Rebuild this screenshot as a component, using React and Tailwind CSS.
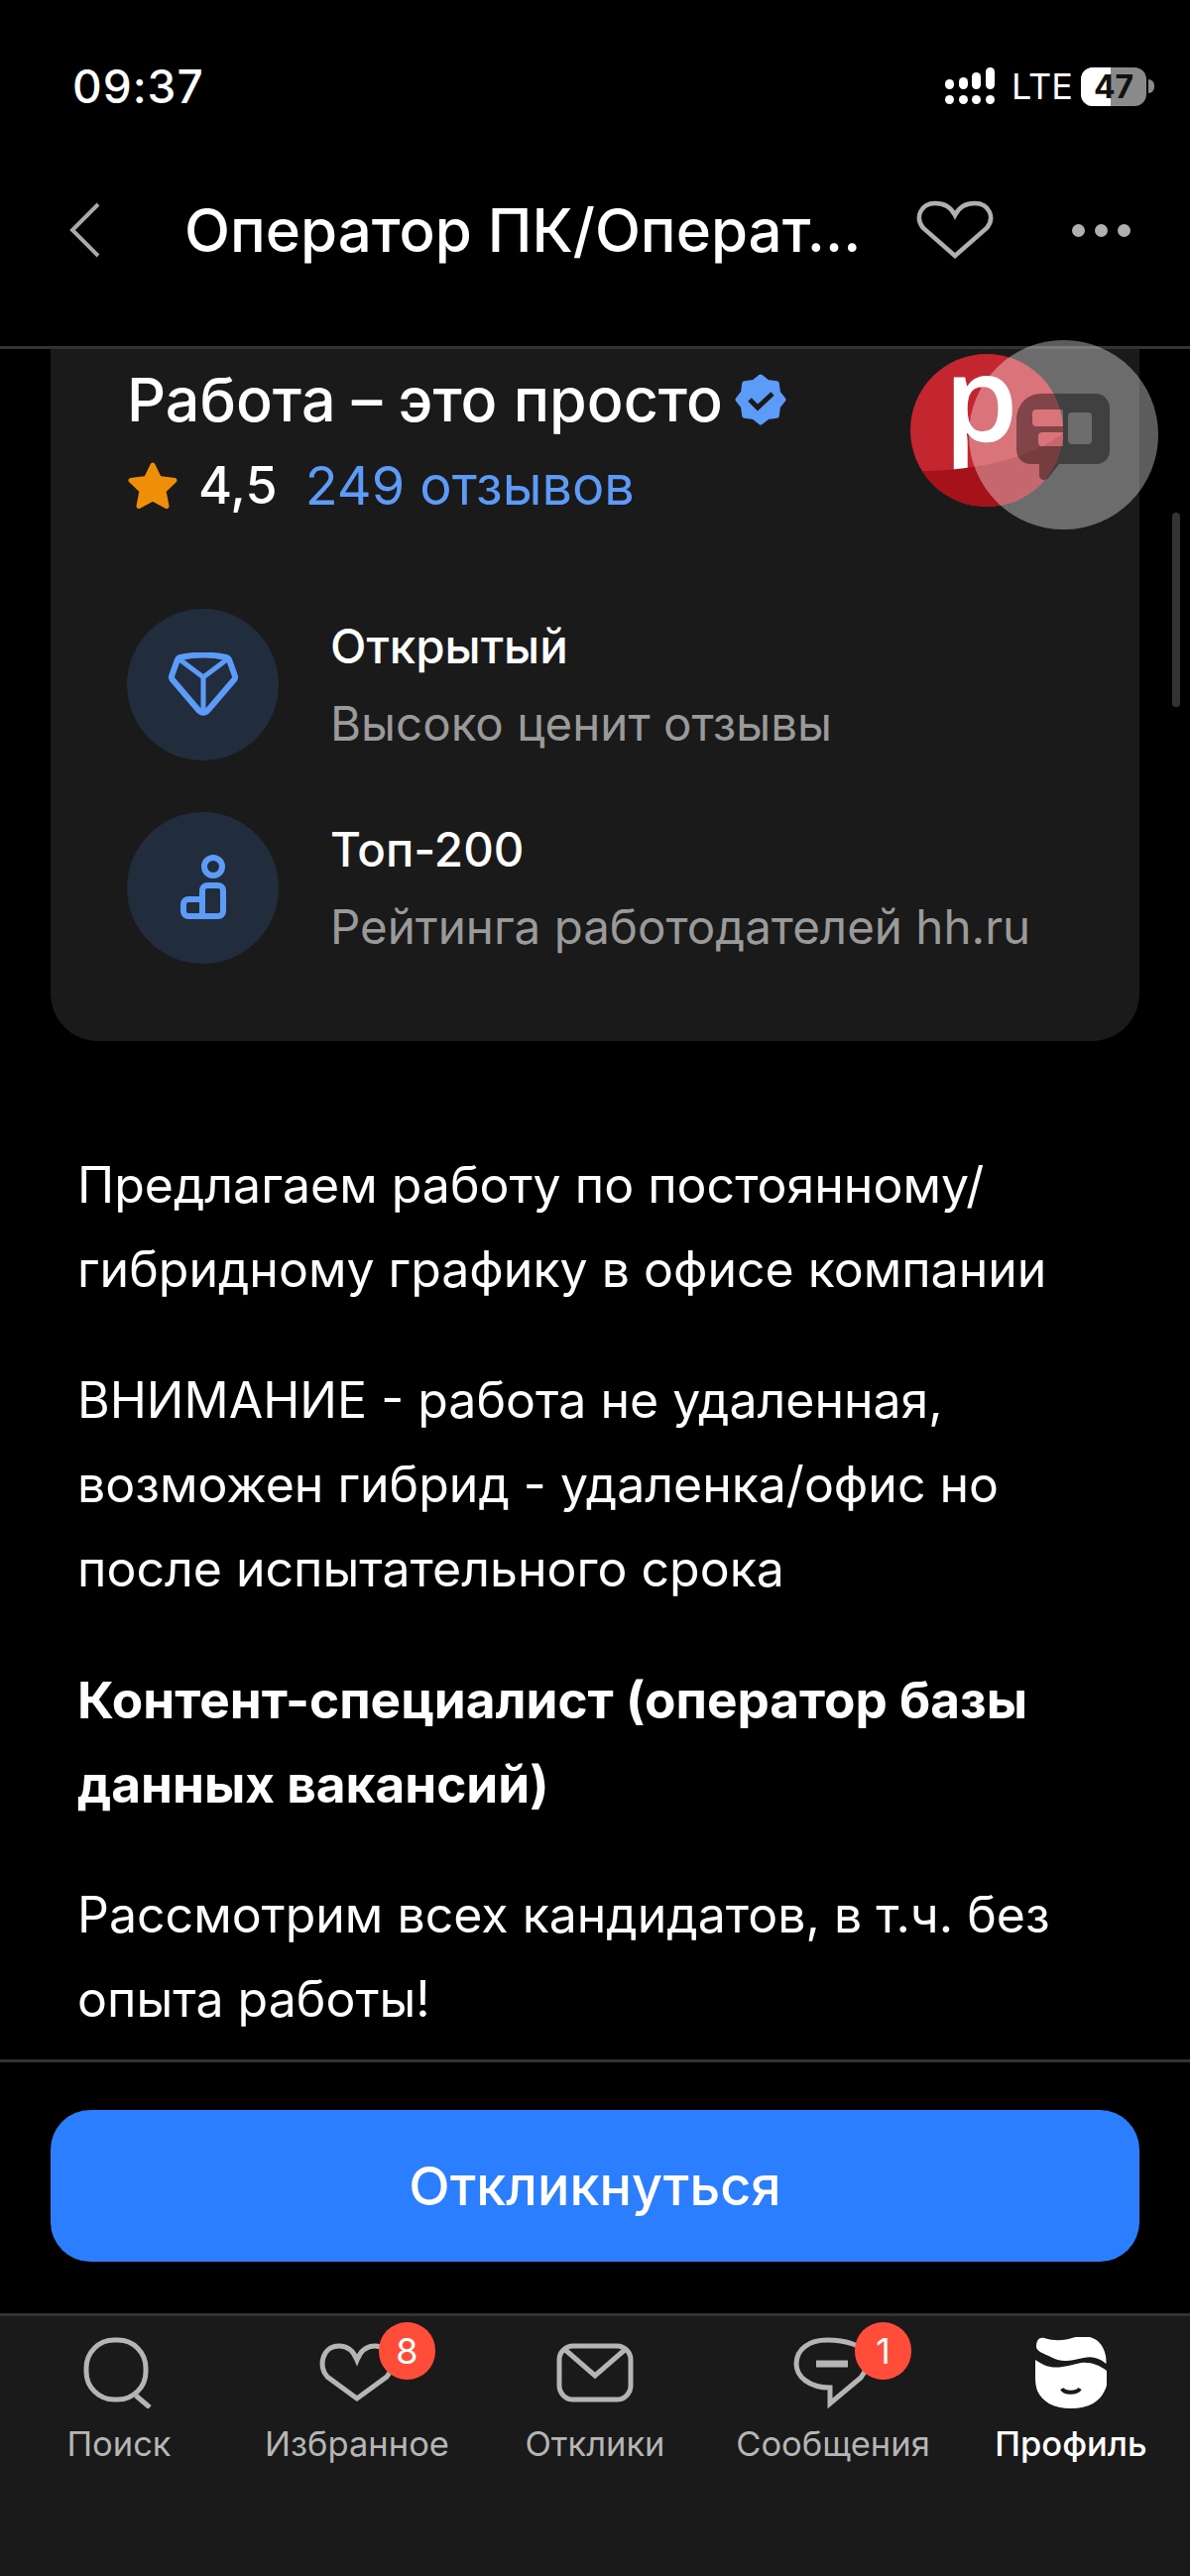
import React from 'react';

const FONT = 'font-["Inter","Noto_Sans",sans-serif]';

const PARAGRAPHS = [
  { lines: ['Предлагаем работу по постоянному/', 'гибридному графику в офисе компании'] },
  { lines: ['ВНИМАНИЕ - работа не удаленная,', 'возможен гибрид - удаленка/офис но', 'после испытательного срока'] },
  { lines: ['Контент-специалист (оператор базы', 'данных вакансий)'], bold: true },
  { lines: ['Рассмотрим всех кандидатов, в т.ч. без', 'опыта работы!'] },
];

function StatusBar() {
  return (
    <div className="h-[174px] pl-[73px] pr-[36px] pt-[59px] flex justify-between items-start">
      <span className="text-[46px] leading-[56px] font-medium tracking-[1px] text-white">09:37</span>
      <div className="flex items-center gap-[17px] pt-[8px]">
        <svg width="50" height="38" viewBox="0 0 50 38" fill="#fff">
          <rect x="0" y="28" width="9" height="9" rx="4.5" />
          <rect x="14" y="28" width="9" height="9" rx="4.5" />
          <rect x="27" y="28" width="9" height="9" rx="4.5" />
          <rect x="41" y="28" width="9" height="9" rx="4.5" />
          <rect x="0" y="12" width="9" height="10" rx="4.5" />
          <rect x="14" y="10" width="9" height="12" rx="4.5" />
          <rect x="27" y="5" width="9" height="17" rx="4.5" />
          <rect x="41" y="0" width="9" height="22" rx="4.5" />
        </svg>
        <span className="text-[36px] leading-[40px] font-normal text-white w-[53px]">LTE</span>
        <div className="flex items-center gap-[2px]">
          <div className="relative w-[66px] h-[39px] rounded-[12px] overflow-hidden bg-[#8a8a8a] flex items-center justify-center">
            <div className="absolute left-0 top-0 bottom-0 w-[30px] bg-white" />
            <span className="relative text-[32px] leading-[39px] font-bold text-[#111]">47</span>
          </div>
          <div className="w-[6px] h-[14px] rounded-r-full bg-[#8a8a8a]" />
        </div>
      </div>
    </div>
  );
}

function NavBar() {
  return (
    <div className="h-[122px] flex items-center pl-[70px] pr-[60px] pb-[6px]">
      <svg width="32" height="58" viewBox="0 0 32 58" fill="none" stroke="#a9a9a9" strokeWidth="4" className="shrink-0">
        <path d="M29 3 3 29l26 26" />
      </svg>
      <span className="ml-[84px] w-[700px] text-[60px] leading-[70px] font-medium text-white whitespace-nowrap">Оператор ПК/Операт…</span>
      <svg width="78" height="60" viewBox="0 0 78 60" fill="none" stroke="#b0b0b0" strokeWidth="4.5" className="ml-[38px] shrink-0">
        <path d="M39 56 7 28C-2 17 5 3 19 3c9 0 16 4 20 12 4-8 11-12 20-12 14 0 21 14 12 25z" />
      </svg>
      <div className="ml-auto flex gap-[10px]">
        <div className="w-[13px] h-[13px] rounded-full bg-[#b0b0b0]" />
        <div className="w-[13px] h-[13px] rounded-full bg-[#b0b0b0]" />
        <div className="w-[13px] h-[13px] rounded-full bg-[#b0b0b0]" />
      </div>
    </div>
  );
}

function VerifiedBadge() {
  return (
    <svg width="52" height="52" viewBox="0 0 52 52" className="shrink-0 -ml-[2px]">
      <path
        d="M26 3 33 8.500 42.300 9.700 43.500 19 49 26 43.500 33 42.300 42.300 33 43.500 26 49 19 43.500 9.700 42.300 8.500 33 3 26 8.500 19 9.700 9.700 19 8.500Z"
        fill="#5c9bf7"
        stroke="#5c9bf7"
        strokeWidth="5"
        strokeLinejoin="round"
      />
      <path d="M15 26l8 8 15-14" fill="none" stroke="#1a1a1a" strokeWidth="5" />
    </svg>
  );
}

function DiamondIcon() {
  return (
    <svg width="72" height="66" viewBox="0 0 72 66" fill="none" stroke="#5c9bf7" strokeWidth="6" strokeLinejoin="round">
      <path d="M13 5c14-3 32-3 46 0 2 .500 3 2 3.500 3.500L68 24c.500 1 0 2-.500 3L41 58c-3 3.500-7 3.500-10 0L4.500 27c-.500-1-1-2-.500-3L9.500 8.500C10 7 11 5.500 13 5Z" />
      <path d="M12 7 36 25 60 7M36 25v34" strokeWidth="5" />
    </svg>
  );
}

function RankIcon() {
  return (
    <svg width="46" height="68" viewBox="0 0 46 68" fill="none" stroke="#5c9bf7" strokeWidth="6" strokeLinejoin="round">
      <circle cx="33" cy="12" r="9" />
      <path d="M22 62V36a5 5 0 0 1 5-5h11a5 5 0 0 1 5 5v21a5 5 0 0 1-5 5H8a5 5 0 0 1-5-5v-7a5 5 0 0 1 5-5h14" />
    </svg>
  );
}

function StarIcon() {
  return (
    <svg width="52" height="50" viewBox="0 0 52 50" fill="#ef8f07" stroke="#ef8f07" strokeWidth="5" strokeLinejoin="round">
      <path d="M26 4 32.500 17.500 48 19.500 37 30 40 45.500 26 38 12 45.500 15 30 4 19.500 19.500 17.500Z" />
    </svg>
  );
}

function Perk({ icon, title, text }) {
  return (
    <div className="flex items-center gap-[53px]">
      <div className="w-[153px] h-[153px] rounded-full bg-[#212c3d] flex items-center justify-center shrink-0">{icon}</div>
      <div className="flex flex-col gap-[20px] -ml-[1px]">
        <span className="text-[47.500px] leading-[58px] font-medium text-white">{title}</span>
        <span className="text-[47.500px] leading-[58px] text-[#9a9a9a] whitespace-nowrap">{text}</span>
      </div>
    </div>
  );
}

function CompanyCard() {
  return (
    <div className="mx-[51px] h-[698px] bg-[#1a1a1a] rounded-b-[48px] pl-[77px] pr-[40px]">
      <div className="pt-[14px] flex items-center gap-[14px] h-[88px]">
        <span className="text-[61px] leading-[70px] font-medium text-white whitespace-nowrap">Работа – это просто</span>
        <VerifiedBadge />
      </div>
      <div className="mt-[20px] h-[60px] flex items-center">
        <StarIcon />
        <span className="ml-[20px] text-[52px] leading-[60px] font-medium text-white">4,5</span>
        <span className="ml-[28px] text-[54px] leading-[60px] text-[#5c9bf7] whitespace-nowrap">249 отзывов</span>
      </div>
      <div className="mt-[94px] flex flex-col gap-[52px]">
        <Perk icon={<DiamondIcon />} title="Открытый" text="Высоко ценит отзывы" />
        <Perk icon={<RankIcon />} title="Топ-200" text="Рейтинга работодателей hh.ru" />
      </div>
    </div>
  );
}

function Description() {
  return (
    <div className="pl-[78px] pt-[103px] flex flex-col gap-[47px]">
      {PARAGRAPHS.map((p) => (
        <div key={p.lines[0]} className={p.bold ? 'font-bold text-[51.300px]' : 'font-normal text-[50px]'}>
          {p.lines.map((line) => (
            <div key={line} className="leading-[85px] text-white whitespace-nowrap">{line}</div>
          ))}
        </div>
      ))}
    </div>
  );
}

function LogoBubble() {
  return (
    <div className="absolute left-[918px] top-[357px] w-[154px] h-[154px] rounded-full bg-[#c3262f] overflow-hidden">
      <span className="absolute left-[34px] top-0 text-[120px] leading-[84px] font-semibold font-['Open_Sans',sans-serif] text-white">p</span>
      <svg width="154" height="154" viewBox="0 0 154 154" className="absolute left-0 top-0">
        <path d="M8 118c50 0 110-10 146-38v74H0V118Z" fill="#a5121a" />
      </svg>
    </div>
  );
}

function TranslateButton() {
  // floating translucent circle with the dark speech bubble inside
  return (
    <div className="absolute left-[977px] top-[343px] w-[191px] h-[191px] rounded-full bg-[#ffffff5c] flex items-center justify-center">
      <svg width="96" height="90" viewBox="0 0 96 90" className="mt-[4px] -ml-[1px]">
        <path
          fillRule="evenodd"
          fill="#00000066"
          d="M26 1h54c9 0 15 6 15 15v43c0 7-6 13-13 13H44L33 86c-3 4-9 2-9-3V72h-8C7 72 1 66 1 57V28C1 12 12 1 26 1ZM21 17h27v17H21a4 4 0 0 1-4-4v-9a4 4 0 0 1 4-4ZM27 40h21v14H27a4 4 0 0 1-4-4v-6a4 4 0 0 1 4-4ZM57 20h16a4 4 0 0 1 4 4v24a4 4 0 0 1-4 4H57a4 4 0 0 1-4-4V24a4 4 0 0 1 4-4Z"
        />
      </svg>
    </div>
  );
}

function SearchIcon() {
  return (
    <svg width="72" height="72" viewBox="0 0 72 72" fill="none" stroke="#b5b5b5" strokeWidth="5">
      <rect x="3" y="3" width="60" height="60" rx="28" />
      <path d="M53 59l14 12" />
    </svg>
  );
}

function HeartIcon() {
  return (
    <svg width="76" height="60" viewBox="0 0 76 60" fill="none" stroke="#b5b5b5" strokeWidth="5">
      <path d="M38 56 8 34C-1 25 2 3 20 3c8 0 14 4 18 14C42 7 48 3 56 3c18 0 21 22 12 31Z" />
    </svg>
  );
}

function MailIcon() {
  return (
    <svg width="78" height="60" viewBox="0 0 78 60" fill="none" stroke="#b5b5b5" strokeWidth="5">
      <rect x="3" y="3" width="72" height="54" rx="14" />
      <path d="M8 6 39 33 70 6" />
    </svg>
  );
}

function ChatIcon() {
  return (
    <svg width="80" height="72" viewBox="0 0 80 72" fill="none" stroke="#b5b5b5" strokeWidth="5">
      <path d="M34 3c20 0 36 6 40 14 3 7 0 16-6 24L37 67V51C16 51 3 40 3 27 3 12 16 3 34 3Z" />
      <path d="M23 27h32" strokeWidth="7" />
    </svg>
  );
}

function ProfileIcon() {
  return (
    <svg width="72" height="72" viewBox="0 0 72 72" fill="#fff">
      <path d="M1 10C1 3 4 0 9 1c10 3 18 3 28 0 12-4 30-3 34 18 .500 3 .500 5 .500 8-7-6-14-8-23-6-12 3-23 5-33-1C9 17 1 14 1 10Z" />
      <path d="M0 23c5 3 9 6 15 7 11 2 20-2 31-4 10-1 18 2 26 8 1 9 1 14-2 20-5 11-16 18-34 18S7 65 2 54c-3-8-2-20-2-31Z" />
      <path d="M27 52c2 5 15 5 18 0" fill="none" stroke="#1a1a1a" strokeWidth="4" />
    </svg>
  );
}

function TabItem({ icon, label, badge, active }) {
  return (
    <div className="relative flex flex-col items-center">
      <div className="h-[72px] flex items-center justify-center">{icon}</div>
      <span className={`mt-[16px] text-[34.500px] leading-[40px] whitespace-nowrap ${active ? 'font-medium text-white' : 'text-[#b5b5b5]'}`}>{label}</span>
      {badge && (
        <div className="absolute left-[142px] top-[-15px] w-[57px] h-[58px] rounded-full bg-[#ff4d3a] flex items-center justify-center text-[36px] text-white">{badge}</div>
      )}
    </div>
  );
}

export default function App() {
  return (
    <div className={`relative w-[1200px] h-[2598px] bg-black overflow-hidden flex flex-col ${FONT}`}>
      <div className="h-[349px] shrink-0">
        <StatusBar />
        <NavBar />
      </div>
      <div className="h-[3px] shrink-0 bg-[#333]" />
      <div className="flex-1 min-h-0 overflow-hidden">
        <CompanyCard />
        <Description />
      </div>
      <div className="h-[3px] shrink-0 bg-[#333]" />
      <div className="h-[253px] shrink-0 px-[51px] pt-[48px]">
        <div className="h-[153px] rounded-[40px] bg-[#2b7fff] flex items-center justify-center text-[54px] font-medium text-white">Откликнуться</div>
      </div>
      <div className="h-[3px] shrink-0 bg-[#333]" />
      <div className="h-[262px] shrink-0 bg-[#1a1a1a] grid grid-cols-5 pt-[21px] items-start">
        <TabItem icon={<SearchIcon />} label="Поиск" />
        <TabItem icon={<HeartIcon />} label="Избранное" badge="8" />
        <TabItem icon={<MailIcon />} label="Отклики" />
        <TabItem icon={<ChatIcon />} label="Сообщения" badge="1" />
        <TabItem icon={<ProfileIcon />} label="Профиль" active />
      </div>
      <LogoBubble />
      <TranslateButton />
      <div className="absolute left-[1182px] top-[517px] w-[8px] h-[196px] rounded-full bg-[#333]" />
    </div>
  );
}
